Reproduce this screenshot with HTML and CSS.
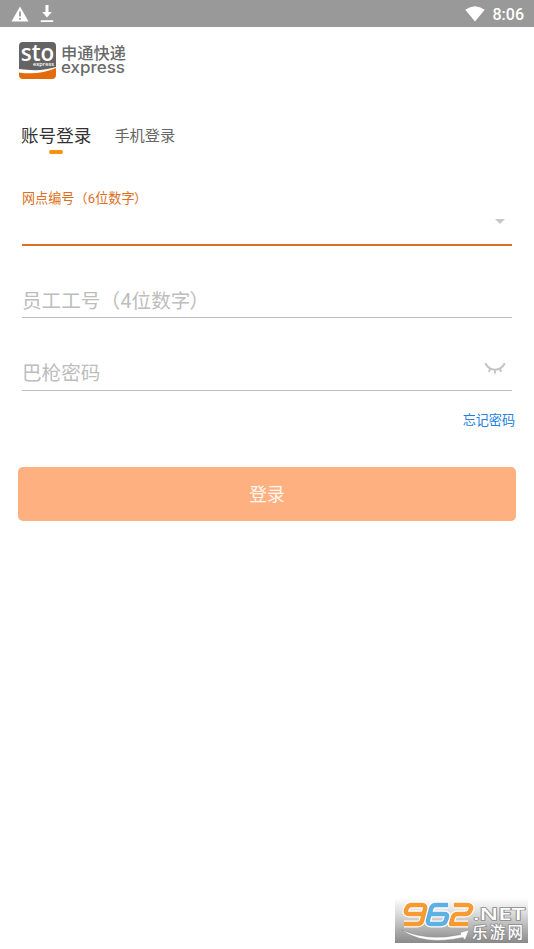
FILE: index.html
```html
<!DOCTYPE html>
<html lang="zh-CN">
<head>
<meta charset="utf-8">
<title>申通快递</title>
<link rel="stylesheet" href="styles.css">
</head>
<body>
<header class="status">
  <svg class="warn" width="18" height="16" viewBox="0 0 18 16"><path fill="#fff" fill-rule="evenodd" d="M9 .5 17.5 15.5H.5ZM8.1 5.5V10.5H9.9V5.5ZM8.1 12V13.8H9.9V12Z"/></svg>
  <svg class="download" width="14" height="18" viewBox="0 0 14 18"><path fill="#fff" d="M5.5 0h3v7h3.3L7 12.6 2.2 7h3.3ZM.8 15.2h12.4V17H.8Z"/></svg>
  <svg class="wifi" width="20" height="16" viewBox="0 0 20 16"><path fill="#fff" d="M.3 3.8Q10-3.2 19.7 3.8L10 15.6Z"/></svg>
  <span class="clock">8:06</span>
</header>
<main>
  <div class="brand">
    <svg width="37" height="37" viewBox="0 0 37 37">
      <path fill="#646464" d="M4 0H33Q37 0 37 4V25Q22 30 0 27V4Q0 0 4 0Z"/>
      <path fill="#e46b0c" d="M0 30.5Q20 33.5 37 26V33Q37 37 33 37H4Q0 37 0 33Z"/>
      <text class="sto" x="1.8" y="19.2" textLength="33.5" lengthAdjust="spacingAndGlyphs">sto</text>
      <text class="mini" x="14" y="24" textLength="21" lengthAdjust="spacingAndGlyphs">express</text>
    </svg>
    <svg width="68" height="37" viewBox="0 0 68 37">
      <text class="brand-cn" x="0" y="16.7" textLength="65">申通快递</text>
      <text class="brand-en" x="0" y="31" textLength="64" lengthAdjust="spacingAndGlyphs">express</text>
    </svg>
  </div>
  <nav class="tabs">
    <a class="tab active">账号登录</a>
    <a class="tab">手机登录</a>
  </nav>
  <section class="form">
    <div class="field branch">
      <label>网点编号<i class="open">（</i>6位数字<i class="close">）</i></label>
      <svg class="arrow" width="10" height="5" viewBox="0 0 10 5"><path fill="#c8c8c8" d="M0 0H10L5 5Z"/></svg>
    </div>
    <div class="field staff"><span>员工工号<i class="open">（</i>4位数字<i class="close">）</i></span></div>
    <div class="field password">
      <span>巴枪密码</span>
      <svg class="eye" width="22" height="14" viewBox="0 0 22 14"><path fill="none" stroke="#c4c4c4" stroke-width="2" d="M1.2 1.2C6 9.8 16 9.8 20.8 1.2M6.2 6.8 4.8 9.8M11 8V11.5M15.8 6.8 17.2 9.8"/></svg>
    </div>
  </section>
  <a class="forgot">忘记密码</a>
  <button class="login">登录</button>
</main>
<aside class="watermark">
  <svg width="133" height="45" viewBox="0 0 133 45">
    <g class="num-edge">
      <path d="M28 16H14Q10 16 11 12L12 10Q13 7 17 7H27Q31 7 30 11L27 23Q26 26 22 26H9"/>
      <path d="M53 7H41Q37 7 36 11L33 22Q32 26 36 26H46Q50 26 51 22L52 19Q53 16 49 16H35"/>
      <path d="M59 7H72Q77 7 76 11L75 13Q74 16 70 16H63Q59 16 58 19L56 26H73"/>
    </g>
    <g class="num-face">
      <path stroke="#f79a32" d="M28 16H14Q10 16 11 12L12 10Q13 7 17 7H27Q31 7 30 11L27 23Q26 26 22 26H9"/>
      <path stroke="#5fb0e2" d="M53 7H41Q37 7 36 11L33 22Q32 26 36 26H46Q50 26 51 22L52 19Q53 16 49 16H35"/>
      <path stroke="#f79a32" d="M59 7H72Q77 7 76 11L75 13Q74 16 70 16H63Q59 16 58 19L56 26H73"/>
    </g>
    <path fill="#fff" stroke="#888" stroke-width=".5" d="M6 31.5Q32 44 66 36.5L65 34.5 74 32 70 42 68 39.5Q28 48 6 31.5Z"/>
    <text class="net" x="78" y="22" textLength="52" lengthAdjust="spacingAndGlyphs">.NET</text>
    <text class="site" x="77" y="40" textLength="51">乐游网</text>
  </svg>
</aside>
</body>
</html>
```
FILE: styles.css
```css
* { box-sizing: border-box; }
body {
  margin: 0;
  height: 949px;
  display: flex;
  flex-direction: column;
  overflow: hidden;
  background: #fff;
  font-family: Roboto, "Noto Sans CJK SC", sans-serif;
}
svg { display: block; flex: none; overflow: visible; }
i { font-style: normal; font-family: "Noto Sans CJK SC", sans-serif; }
.status {
  height: 27px;
  display: flex;
  align-items: center;
  padding: 0 10px 0 11px;
  background: #999;
  color: #fff;
}
.download { margin-left: 11px; }
.wifi { margin-left: auto; }
.clock { margin-left: 8px; font-size: 16px; font-weight: 500; line-height: 27px; padding-top: 2px; }
main { flex: 1; display: flex; flex-direction: column; }
.brand { display: flex; gap: 5px; height: 37px; margin: 15px 0 0 19px; }
.sto { font: 600 24px "Open Sans", sans-serif; fill: #fff; }
.mini { font: 600 5.5px "Open Sans", sans-serif; fill: #fff; }
.brand-cn { font: 500 16.2px "Noto Sans CJK SC", sans-serif; fill: #6a6a6a; }
.brand-en { font: 500 15.5px Inter, sans-serif; fill: #6a6a6a; }
.tabs {
  display: flex;
  align-items: center;
  gap: 23px;
  height: 32px;
  margin: 41px 0 0 21px;
}
.tab { font-size: 15.2px; line-height: 32px; color: #666; }
.tab.active { position: relative; font-size: 17.6px; color: #333; }
.active::after {
  content: "";
  position: absolute;
  left: 28px;
  top: 30px;
  width: 14px;
  height: 4px;
  border-radius: 2px;
  background: #f7930c;
}
.form { margin: 36px 22px 0; }
.field {
  display: flex;
  justify-content: space-between;
  color: #bdbdbd;
  font-size: 19.6px;
  line-height: 30px;
}
.field span, .field label { white-space: nowrap; }
.open { margin-right: .03em; }
.close { margin-left: -.04em; }
.branch {
  height: 58px;
  border-bottom: 2px solid #d8701f;
}
.branch label { font-size: 13.1px; line-height: 20px; color: #de6f1c; }
.arrow { margin: 31px 7px 0 0; }
.staff { height: 72px; padding-top: 39px; border-bottom: 1px solid #bdbdbd; }
.password { height: 73px; padding-top: 41px; border-bottom: 1px solid #bdbdbd; }
.eye { margin: 3px 6px 0 0; }
.forgot {
  align-self: flex-end;
  margin: 20px 19px 0 0;
  font-size: 13.1px;
  line-height: 20px;
  color: #2580e0;
}
.login {
  height: 54px;
  margin: 36px 18px 0;
  padding: 1px 0 0;
  border: 0;
  border-radius: 5px;
  background: #ffb080;
  color: #fff7ef;
  font: 17.8px/53px Roboto, "Noto Sans CJK SC", sans-serif;
}
.watermark {
  align-self: flex-end;
  width: 133px;
  height: 45px;
  margin: 0 6px 6px 0;
  background: linear-gradient(#fff, #d5d5d5 40%, #898989);
}
.num-edge, .num-face { fill: none; stroke-linejoin: round; }
.num-edge { stroke: #fff; stroke-width: 7px; }
.num-face { stroke-width: 4.5px; }
.net, .site {
  fill: #fff;
  stroke: #888;
  stroke-width: 1.4px;
  paint-order: stroke;
}
.net { font: 600 16px "Open Sans", sans-serif; }
.site { font: 500 15.5px "Noto Sans CJK SC", sans-serif; }
```
